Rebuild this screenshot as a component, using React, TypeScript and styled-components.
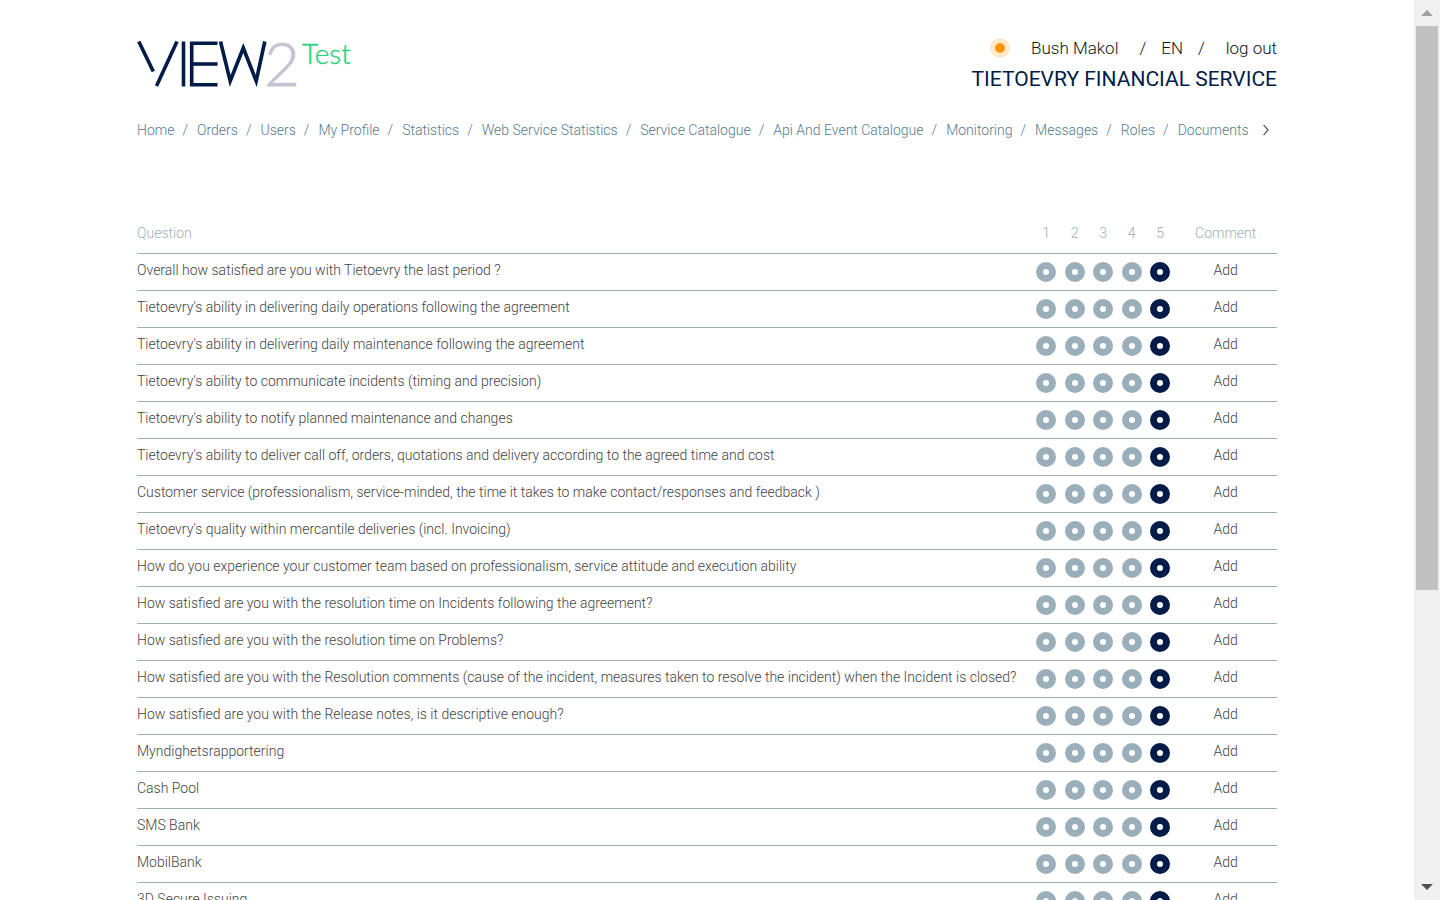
import React from 'react';
import styled, { createGlobalStyle } from 'styled-components';

const navy = '#021b47';
const steel = '#9bafba';
const font = "Roboto, 'Liberation Sans', sans-serif";

const GlobalStyle = createGlobalStyle`
  *, *::before, *::after { box-sizing: border-box; }
  body {
    margin: 0;
    background: #fff;
    color: #444;
    font: 300 14px/20px ${font};
  }
  a { color: inherit; text-decoration: none; }
`;

const Shell = styled.div`
  display: flex;
  height: 100vh;
  overflow: hidden;
`;

const Viewport = styled.div`
  flex: 1;
  min-width: 0;
  overflow: hidden;
`;

const Page = styled.div`
  max-width: 1140px;
  margin: 0 auto;
`;

const Header = styled.header`
  display: flex;
  justify-content: space-between;
  align-items: flex-start;
  padding-top: 36px;
`;

const LogoLink = styled.a`
  display: block;
  svg { display: block; overflow: visible; }
`;

const Account = styled.div`
  display: flex;
  flex-direction: column;
  align-items: flex-end;
`;

const AccountRow = styled.div`
  display: flex;
  align-items: center;
  color: #111;
  font-size: 17px;
  line-height: 24px;
`;

const Status = styled.span`
  width: 20px;
  height: 20px;
  margin-right: 21px;
  border: 5px solid #ffe9cc;
  border-radius: 50%;
  background: #ff9800;
`;

const Slash = styled.span<{ $before: number; $after: number }>`
  margin: 0 ${p => p.$after}px 0 ${p => p.$before}px;
`;

const PlainButton = styled.button`
  padding: 0;
  border: 0;
  background: none;
  color: inherit;
  font: inherit;
  cursor: pointer;
`;

const Company = styled.h1`
  margin: 5px 0 0;
  color: ${navy};
  font-size: 21px;
  font-weight: 400;
  line-height: 28px;
`;

const Nav = styled.nav`
  display: flex;
  align-items: center;
  margin-top: 27px;
  color: #547b90;
`;

const NavList = styled.ul`
  display: flex;
  flex: 1;
  min-width: 0;
  margin: 0;
  padding: 0;
  overflow: hidden;
  list-style: none;
  white-space: nowrap;
`;

const NavItem = styled.li`
  & + &::before {
    content: '/';
    margin: 0 9px 0 8px;
  }
`;

const NextButton = styled(PlainButton)`
  display: flex;
  justify-content: center;
  width: 28px;
  padding-left: 5px;
  color: #555;
`;

const Survey = styled.table`
  width: 100%;
  margin-top: 72px;
  border-collapse: collapse;
  table-layout: fixed;
`;

const Col = styled.col<{ $width: string }>`
  width: ${p => p.$width};
`;

const HeadCell = styled.th<{ $center?: boolean }>`
  height: 41px;
  padding: 0 0 10px;
  border-bottom: 1px solid ${steel};
  color: ${steel};
  font-weight: 300;
  line-height: 20px;
  text-align: ${p => (p.$center ? 'center' : 'left')};
  vertical-align: bottom;
`;

const Cell = styled.td<{ $center?: boolean }>`
  height: 37px;
  padding: 6px 0 10px;
  border-bottom: 1px solid ${steel};
  text-align: ${p => (p.$center ? 'center' : 'left')};
  vertical-align: top;
  white-space: nowrap;
`;

const RadioCell = styled(Cell)`
  padding: 8px 0;
`;

const Radio = styled.input`
  display: block;
  width: 20px;
  height: 20px;
  margin: 0 auto;
  appearance: none;
  border: 7px solid ${steel};
  border-radius: 50%;
  background: #fff;
  &:checked { border-color: ${navy}; }
`;

const ScrollTrack = styled.div`
  display: flex;
  flex-direction: column;
  align-items: center;
  width: 26px;
  background: #f0f0f0;
`;

const ScrollArrow = styled.div<{ $down?: boolean }>`
  display: flex;
  flex: none;
  align-items: center;
  justify-content: center;
  height: 26px;
  margin-top: ${p => (p.$down ? 'auto' : 0)};
  color: ${p => (p.$down ? '#505050' : '#a0a0a0')};
`;

const ScrollThumb = styled.div`
  width: 22px;
  height: 62.7%;
  margin-bottom: auto;
  background: #c0c0c0;
`;

const navItems = [
  'Home', 'Orders', 'Users', 'My Profile', 'Statistics', 'Web Service Statistics',
  'Service Catalogue', 'Api And Event Catalogue', 'Monitoring', 'Messages', 'Roles', 'Documents',
];

const questions = [
  'Overall how satisfied are you with Tietoevry the last period ?',
  "Tietoevry's ability in delivering daily operations following the agreement",
  "Tietoevry's ability in delivering daily maintenance following the agreement",
  "Tietoevry's ability to communicate incidents (timing and precision)",
  "Tietoevry's ability to notify planned maintenance and changes",
  "Tietoevry's ability to deliver call off, orders, quotations and delivery according to the agreed time and cost",
  'Customer service (professionalism, service-minded, the time it takes to make contact/responses and feedback )',
  "Tietoevry's quality within mercantile deliveries (incl. Invoicing)",
  'How do you experience your customer team based on professionalism, service attitude and execution ability',
  'How satisfied are you with the resolution time on Incidents following the agreement?',
  'How satisfied are you with the resolution time on Problems?',
  'How satisfied are you with the Resolution comments (cause of the incident, measures taken to resolve the incident) when the Incident is closed?',
  'How satisfied are you with the Release notes, is it descriptive enough?',
  'Myndighetsrapportering',
  'Cash Pool',
  'SMS Bank',
  'MobilBank',
  '3D Secure Issuing',
];

const scores = [1, 2, 3, 4, 5];

function Logo() {
  return (
    <svg width="216" height="56" viewBox="0 0 216 56" role="img" aria-label="VIEW2 Test">
      <g fill="none" stroke={navy} strokeWidth="3.6">
        <line x1="1.8" y1="5.5" x2="16.3" y2="35.5" />
        <line x1="40" y1="5.5" x2="19.5" y2="50" />
        <line x1="46.5" y1="5.5" x2="46.5" y2="50.5" />
        <polyline points="80.5,7.2 54.7,7.2 54.7,48.8 80.5,48.8" />
        <line x1="54.7" y1="28" x2="80.5" y2="28" />
        <polyline points="83.5,5.5 93.2,45 106.3,12 119.2,45 127.8,5.5" strokeMiterlimit="10" />
      </g>
      <g fontFamily="Lato, sans-serif" fontWeight="300">
        <text x="127" y="50" fill="#c3c5d1" stroke="#c3c5d1" strokeWidth="0.8" fontSize="62">2</text>
        <text x="165" y="28" fill="#2bd17e" stroke="#2bd17e" strokeWidth="0.4" fontSize="28">Test</text>
      </g>
    </svg>
  );
}

export default function App() {
  return (
    <>
      <GlobalStyle />
      <Shell>
        <Viewport>
          <Page>
            <Header>
              <LogoLink href="#home"><Logo /></LogoLink>
              <Account>
                <AccountRow>
                  <Status />
                  <a href="#profile">Bush Makol</a>
                  <Slash $before={21} $after={15}>/</Slash>
                  <PlainButton type="button">EN</PlainButton>
                  <Slash $before={15} $after={21}>/</Slash>
                  <a href="#logout">log out</a>
                </AccountRow>
                <Company>TIETOEVRY FINANCIAL SERVICE</Company>
              </Account>
            </Header>
            <Nav aria-label="Main">
              <NavList>
                {navItems.map(item => (
                  <NavItem key={item}><a href="#nav">{item}</a></NavItem>
                ))}
              </NavList>
              <NextButton type="button" aria-label="More">
                <svg width="6" height="12" viewBox="0 0 6 12" fill="none" stroke="currentColor" strokeWidth="1.2">
                  <path d="M0.6 0.8 L5 6 L0.6 11.2" />
                </svg>
              </NextButton>
            </Nav>
            <Survey>
              <colgroup>
                <Col $width="78.5%" />
                {scores.map(s => <Col key={s} $width="2.5%" />)}
                <Col $width="9%" />
              </colgroup>
              <thead>
                <tr>
                  <HeadCell scope="col">Question</HeadCell>
                  {scores.map(s => <HeadCell key={s} scope="col" $center>{s}</HeadCell>)}
                  <HeadCell scope="col" $center>Comment</HeadCell>
                </tr>
              </thead>
              <tbody>
                {questions.map((question, i) => (
                  <tr key={question}>
                    <Cell>{question}</Cell>
                    {scores.map(s => (
                      <RadioCell key={s}>
                        <Radio type="radio" name={`q${i}`} value={s} defaultChecked={s === 5} aria-label={`${question} ${s}`} />
                      </RadioCell>
                    ))}
                    <Cell $center><PlainButton type="button">Add</PlainButton></Cell>
                  </tr>
                ))}
              </tbody>
            </Survey>
          </Page>
        </Viewport>
        <ScrollTrack aria-hidden="true">
          <ScrollArrow>
            <svg width="12" height="6" viewBox="0 0 12 6"><path d="M0 6 L6 0 L12 6 Z" fill="currentColor" /></svg>
          </ScrollArrow>
          <ScrollThumb />
          <ScrollArrow $down>
            <svg width="12" height="6" viewBox="0 0 12 6"><path d="M0 0 L6 6 L12 0 Z" fill="currentColor" /></svg>
          </ScrollArrow>
        </ScrollTrack>
      </Shell>
    </>
  );
}
